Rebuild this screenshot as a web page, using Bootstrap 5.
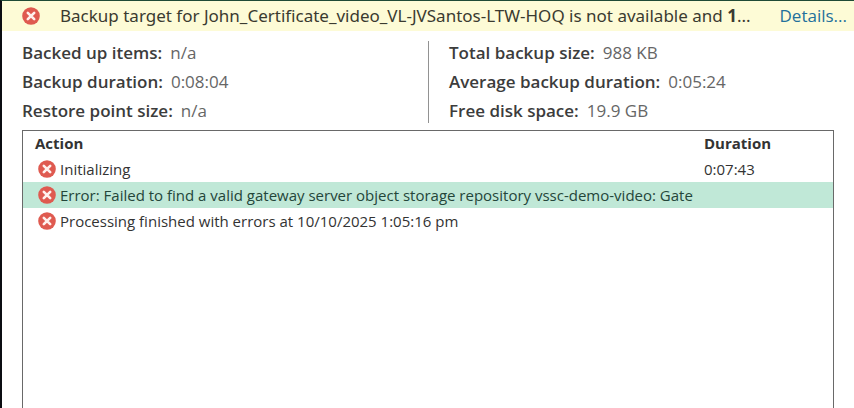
<!DOCTYPE html>
<html lang="en">
<head>
<meta charset="utf-8">
<meta name="viewport" content="width=device-width, initial-scale=1">
<title>Backup job status</title>
<link href="https://cdn.jsdelivr.net/npm/bootstrap@5.3.0/dist/css/bootstrap.min.css" rel="stylesheet">
<style>
body { font-family: "Open Sans", "Noto Sans", sans-serif; color: #333; background: #fff; }
.window-frame { border-left: 2px solid #0b0d12; border-top: 1px solid #1f4a35; }
.alert-strip { background: #fdfbd6; height: 30px; padding: 0 7px 0 20px; font-size: 17px; line-height: 30px; }
.alert-message { font-family: "Noto Sans", "Open Sans", sans-serif; margin-left: 20px; color: #3a3a30; }
.details-link { color: #22709c; }
.status-icon { width: 18px; height: 18px; flex: none; }
.summary { margin: 10px 20px 7px; font-size: 17px; line-height: 29px; }
.summary-right { border-left: 1px solid #929292; padding-left: 20px; }
.summary dl { margin: -3px 0 -2px; }
.summary dt { font-weight: 600; margin-right: 8px; color: #3c3c3c; }
.summary dd { margin: 0; color: #666; }
.log-panel { margin: 0 20px; border: 1px solid #696969; border-bottom: 0; }
.log-table { table-layout: fixed; font-size: 15px; line-height: 26px; color: #333; }
.log-table th { font-weight: 700; padding: 0 0 0 12px; height: 25px; line-height: 25px; }
.log-table td { height: 26px; padding: 0 0 0 15px; white-space: nowrap; overflow: hidden; }
.log-table .duration-cell { width: 140px; padding-left: 11px; }
.log-table .picked { background: #c0e8d7; color: #24463a; }
</style>
</head>
<body>
<svg class="d-none" aria-hidden="true">
  <symbol id="error-icon" viewBox="0 0 18 18">
    <circle cx="9" cy="9" r="8.8" fill="#df5a50"/>
    <path d="M5.8 5.8l6.4 6.4M12.2 5.8l-6.4 6.4" stroke="#fff0ed" stroke-width="2.6" stroke-linecap="round"/>
  </symbol>
</svg>
<main class="window-frame vh-100 d-flex flex-column overflow-hidden">
  <div class="alert-strip d-flex align-items-center" role="alert">
    <svg class="status-icon" role="img" aria-label="Error"><use href="#error-icon"/></svg>
    <span class="alert-message text-nowrap">Backup target for John_Certificate_video_VL-JVSantos-LTW-HOQ is not available and <b>1</b>...</span>
    <a class="details-link text-decoration-none ms-auto" href="#details">Details...</a>
  </div>
  <section class="summary row g-0" aria-label="Backup summary">
    <div class="col-6">
      <dl>
        <div class="d-flex"><dt>Backed up items:</dt><dd>n/a</dd></div>
        <div class="d-flex"><dt>Backup duration:</dt><dd>0:08:04</dd></div>
        <div class="d-flex"><dt>Restore point size:</dt><dd>n/a</dd></div>
      </dl>
    </div>
    <div class="col-6 summary-right">
      <dl>
        <div class="d-flex"><dt>Total backup size:</dt><dd>988 KB</dd></div>
        <div class="d-flex"><dt>Average backup duration:</dt><dd>0:05:24</dd></div>
        <div class="d-flex"><dt>Free disk space:</dt><dd>19.9 GB</dd></div>
      </dl>
    </div>
  </section>
  <section class="log-panel flex-grow-1" aria-label="Session log">
    <table class="log-table w-100">
      <thead><tr><th scope="col">Action</th><th scope="col" class="duration-cell">Duration</th></tr></thead>
      <tbody>
        <tr><td><div class="d-flex align-items-center gap-1"><svg class="status-icon" role="img" aria-label="Error"><use href="#error-icon"/></svg><span>Initializing</span></div></td><td class="duration-cell">0:07:43</td></tr>
        <tr class="picked"><td><div class="d-flex align-items-center gap-1 overflow-hidden"><svg class="status-icon" role="img" aria-label="Error"><use href="#error-icon"/></svg><span>Error: Failed to find a valid gateway server object storage repository vssc-demo-video: Gateway</span></div></td><td class="duration-cell"></td></tr>
        <tr><td><div class="d-flex align-items-center gap-1"><svg class="status-icon" role="img" aria-label="Error"><use href="#error-icon"/></svg><span>Processing finished with errors at 10/10/2025 1:05:16 pm</span></div></td><td class="duration-cell"></td></tr>
      </tbody>
    </table>
  </section>
</main>
<script src="https://cdn.jsdelivr.net/npm/bootstrap@5.3.0/dist/js/bootstrap.bundle.min.js"></script>
</body>
</html>
